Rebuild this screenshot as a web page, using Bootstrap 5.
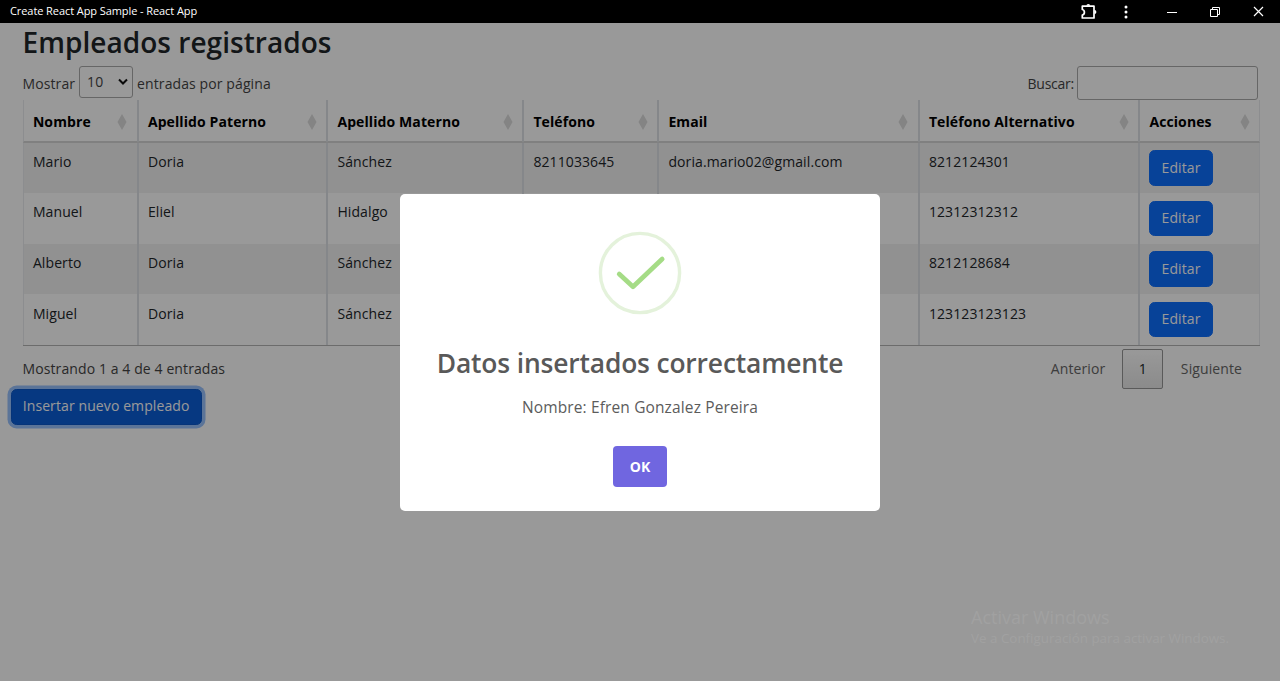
<!DOCTYPE html>
<html lang="es">
<head>
<meta charset="utf-8">
<meta name="viewport" content="width=device-width, initial-scale=1">
<title>Create React App Sample - React App</title>
<link href="https://cdn.jsdelivr.net/npm/bootstrap@5.3.0/dist/css/bootstrap.min.css" rel="stylesheet">
<style>
  html, body { height: 100%; }
  body { font-family: "Open Sans", "Noto Sans", sans-serif; font-size: 14px; line-height: 22.5px; overflow: hidden; color: #444; letter-spacing: .1px; }
  .titlebar { height: 23px; background: #000; color: #fff; font-size: 11px; line-height: 22px; flex: none; }
  .titlebar .win-title { padding-left: 10px; letter-spacing: -.08px; }
  .win-icons { padding-right: 16px; }
  .icon-ext { margin: 0 26px 2px 0; }
  .icon-dots { margin-right: 39px; }
  .icon-win { margin-right: 33px; }
  .page { flex: 1; position: relative; background: #fff; padding: 0 20px 0 22.5px; }
  .page-title { font-size: 28px; line-height: 36px; height: 42px; margin: 0; padding-top: 1px; color: #212529; font-weight: 600; letter-spacing: .04px; }
  .tools { height: 35px; }
  .len-select { width: 54px; height: 32px; border: 1px solid #aaa; border-radius: 3px; padding: 0 4px 0 7px; margin-bottom: 1px; }
  .search-label { letter-spacing: -.25px; }
  .search-box { width: 181px; height: 34px; border: 1px solid #aaa; border-radius: 3px; background: transparent; margin: 0 2.5px 0 2.5px; }
  .emp-table { width: 1237.5px; table-layout: fixed; border-collapse: separate; border-spacing: 0; border-bottom: 1px solid #b4b4b4; color: #212529; }
  .emp-table th, .emp-table td { border-right: 1px solid #dee2e6; border-left: 1px solid #dee2e6; padding: 0 9.4px; vertical-align: top; }
  .emp-table tr > :first-child { border-left-color: #e9ebee; }
  .emp-table tr > :last-child { border-right-color: #e9ebee; }
  .emp-table th { height: 42.5px; padding-top: 10.5px; border-bottom: 2px solid #d5d5d5; color: #000; font-weight: 700; }
  .emp-table td { height: 50.6px; padding-top: 7.5px; }
  .emp-table td > span { position: relative; top: .8px; }
  .emp-table tbody tr:nth-child(odd) td { background: #f2f2f2; }
  .btn-app { font-size: 14px; line-height: 22.5px; padding: 5.6px 11.2px; border-radius: 5.6px; display: block; letter-spacing: .1px; }
  .btn-insert { background: #0b5ed7; border-color: #0a58ca; box-shadow: 0 0 0 3.5px rgba(49,132,253,.5); margin-left: -12px; }
  .info-row { height: 43px; padding-top: 3px; }
  .info-text { padding-top: 9px; }
  .page-cur { width: 41px; height: 40px; border: 1px solid #979797; border-radius: 2px; background: linear-gradient(#fff, #e8e8e8); margin: 0 17.5px 0 17px; }
  .pager { color: #666; padding-right: 18px; }
  .veil { position: absolute; inset: 0; background: rgba(0,0,0,.4); }
  .dialog-box { position: absolute; left: 400px; top: 171px; width: 480px; height: 316.5px; background: #fff; border-radius: 5px; color: #5c5c5c; padding-top: 36.5px; }
  .dialog-title { font-size: 26.4px; font-weight: 600; line-height: 34px; margin: 31px 0 0; color: #595959; letter-spacing: -.16px; }
  .dialog-text { font-size: 15.5px; line-height: 22px; margin-top: 16px; letter-spacing: .13px; }
  .btn-ok { width: 54px; height: 41px; margin-top: 28px; padding: 0; background: #7066e0; color: #fff; border: 0; border-radius: 4px; font-weight: 700; font-size: 14px; }
  .activate { position: absolute; left: 971px; top: 584px; color: #a1a1a1; line-height: 21px; letter-spacing: 0; }
  .act-big { font-size: 18px; }
  .act-small { font-size: 13.4px; }
</style>
</head>
<body class="d-flex flex-column">
<header class="titlebar d-flex justify-content-between">
  <span class="win-title">Create React App Sample - React App</span>
  <div class="win-icons d-flex align-items-center">
    <svg class="icon-ext" width="18" height="18" viewBox="0 0 18 18" fill="none" stroke="#fff" stroke-width="1.7" stroke-linejoin="round"><path d="M2.3 4.2H14V16H2.3V13C5.1 12.5 5.1 8 2.3 7.5Z"/><path d="M6.4 3.8a1.9 1.9 0 0 1 3.8 0ZM14.5 8.1a1.9 1.9 0 0 1 0 3.8Z" fill="#fff" stroke="none"/></svg>
    <svg class="icon-dots" width="4" height="14" viewBox="0 0 4 14" fill="#fff"><circle cx="2" cy="2" r="1.5"/><circle cx="2" cy="7" r="1.5"/><circle cx="2" cy="12" r="1.5"/></svg>
    <svg class="icon-win" width="10" height="10" viewBox="0 0 10 10" stroke="#fff"><path d="M0 5.5H10"/></svg>
    <svg class="icon-win" width="10" height="10" viewBox="0 0 10 10" fill="none" stroke="#fff"><path d="M.5 2.5H7.5V9.5H.5ZM2.5 2.5V.5H9.5V7.5H7.5"/></svg>
    <svg width="11" height="11" viewBox="0 0 11 11" stroke="#fff" stroke-width="1.2"><path d="M1 1L10 10M10 1L1 10"/></svg>
  </div>
</header>
<main class="page">
  <h1 class="page-title">Empleados registrados</h1>
  <div class="tools d-flex justify-content-between align-items-center">
    <div class="d-flex align-items-center gap-1">
      <span class="pt-1">Mostrar</span>
      <div class="len-select d-flex align-items-center justify-content-between"><span>10</span><svg width="10" height="8" viewBox="0 0 10 8" fill="none" stroke="#111" stroke-width="2"><path d="M1 1.5L5 5.5L9 1.5"/></svg></div>
      <span class="pt-1">entradas por página</span>
    </div>
    <div class="d-flex align-items-center"><span class="search-label pt-1">Buscar:</span><input class="search-box" type="text" aria-label="Buscar"></div>
  </div>
  <table class="emp-table">
    <colgroup><col style="width:115px"><col style="width:189.5px"><col style="width:196px"><col style="width:135px"><col style="width:260.5px"><col style="width:220.5px"><col style="width:121px"></colgroup>
    <thead><tr id="head"></tr></thead>
    <tbody id="rows"></tbody>
  </table>
  <div class="info-row d-flex justify-content-between">
    <span class="info-text">Mostrando 1 a 4 de 4 entradas</span>
    <div class="pager d-flex align-items-center">
      <span>Anterior</span>
      <span class="page-cur text-body d-flex align-items-center justify-content-center">1</span>
      <span>Siguiente</span>
    </div>
  </div>
  <button class="btn btn-primary btn-app btn-insert" type="button">Insertar nuevo empleado</button>
  <div class="veil"></div>
  <section class="dialog-box d-flex flex-column align-items-center" role="dialog">
    <svg width="84" height="84" viewBox="0 0 84 84" fill="none"><circle cx="42" cy="42" r="39.6" stroke="#e4f2db" stroke-width="3.4"/><path d="M21.2 43L35 55.8L64.2 28" stroke="#a5dc86" stroke-width="4.7" stroke-linecap="round" stroke-linejoin="round"/></svg>
    <h2 class="dialog-title">Datos insertados correctamente</h2>
    <div class="dialog-text">Nombre: Efren Gonzalez Pereira</div>
    <button class="btn btn-ok" type="button">OK</button>
  </section>
  <div class="activate"><div class="act-big">Activar Windows</div><div class="act-small">Ve a Configuración para activar Windows.</div></div>
</main>
<script src="https://cdn.jsdelivr.net/npm/bootstrap@5.3.0/dist/js/bootstrap.bundle.min.js"></script>
<script>
  const heads = ["Nombre", "Apellido Paterno", "Apellido Materno", "Teléfono", "Email", "Teléfono Alternativo", "Acciones"];
  const rows = [
    ["Mario", "Doria", "Sánchez", "8211033645", "doria.mario02@gmail.com", "8212124301"],
    ["Manuel", "Eliel", "Hidalgo", "", "", "12312312312"],
    ["Alberto", "Doria", "Sánchez", "", "", "8212128684"],
    ["Miguel", "Doria", "Sánchez", "", "", "123123123123"]
  ];
  const diamond = '<svg width="10" height="16" viewBox="0 0 10 16"><path d="M5 0L9.5 8L5 16L.5 8Z" fill="#dcdcdc"/></svg>';
  document.getElementById("head").innerHTML = heads.map(h => `<th><div class="d-flex justify-content-between align-items-center"><span>${h}</span>${diamond}</div></th>`).join("");
  document.getElementById("rows").innerHTML = rows.map(r => "<tr>" + r.map(c => `<td><span>${c}</span></td>`).join("") + '<td><button class="btn btn-primary btn-app" type="button">Editar</button></td></tr>').join("");
</script>
</body>
</html>
